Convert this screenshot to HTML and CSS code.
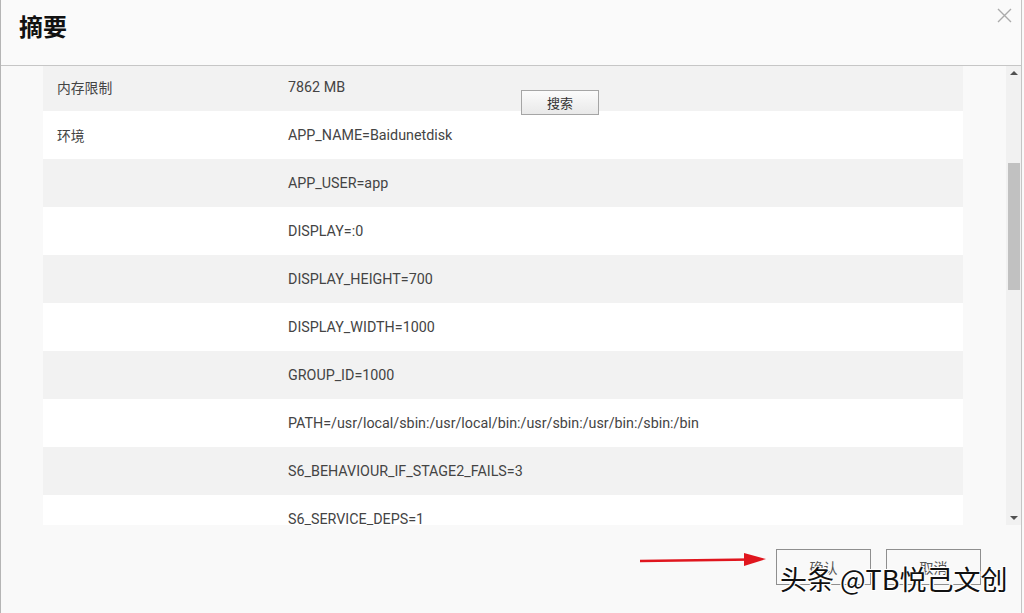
FILE: index.html
```html
<!DOCTYPE html>
<html lang="zh">
<head>
  <meta charset="UTF-8">
  <title>摘要</title>
  <link rel="stylesheet" href="styles.css">
</head>
<body>
  <div class="dialog">
    <div class="header">
      <h1>摘要</h1>
      <svg class="close" width="15" height="15" viewBox="0 0 15 15">
        <path d="M1 1 L14 14 M14 1 L1 14" stroke="#ababab" stroke-width="1.4"/>
      </svg>
    </div>

    <div class="content">
      <div class="table-wrap">
        <div class="table">
          <div class="row"><div class="key">内存限制</div><div class="val">7862 MB</div></div>
          <div class="row"><div class="key">环境</div><div class="val">APP_NAME=Baidunetdisk</div></div>
          <div class="row"><div class="key"></div><div class="val">APP_USER=app</div></div>
          <div class="row"><div class="key"></div><div class="val">DISPLAY=:0</div></div>
          <div class="row"><div class="key"></div><div class="val">DISPLAY_HEIGHT=700</div></div>
          <div class="row"><div class="key"></div><div class="val">DISPLAY_WIDTH=1000</div></div>
          <div class="row"><div class="key"></div><div class="val">GROUP_ID=1000</div></div>
          <div class="row"><div class="key"></div><div class="val">PATH=/usr/local/sbin:/usr/local/bin:/usr/sbin:/usr/bin:/sbin:/bin</div></div>
          <div class="row"><div class="key"></div><div class="val">S6_BEHAVIOUR_IF_STAGE2_FAILS=3</div></div>
          <div class="row"><div class="key"></div><div class="val">S6_SERVICE_DEPS=1</div></div>
        </div>
        <button class="search-btn">搜索</button>
      </div>
      <div class="scrollbar">
        <span class="arrow up"></span>
        <div class="track"><div class="thumb"></div></div>
        <span class="arrow down"></span>
      </div>
    </div>

    <div class="footer">
      <button class="btn">确认</button>
      <button class="btn">取消</button>
      <svg class="red-arrow" width="130" height="16" viewBox="0 0 130 16">
        <line x1="0" y1="8" x2="112" y2="6.5" stroke="#e0161e" stroke-width="2.5"/>
        <polygon points="104,0 126,6 104,13" fill="#e0161e"/>
      </svg>
      <div class="watermark">头条 @TB悦己文创</div>
    </div>
  </div>
</body>
</html>
```

FILE: styles.css
```css
body {
  margin: 0;
  background-color: #f9f9f9;
  font-family: Roboto, "Noto Sans CJK SC", sans-serif;
}
.dialog {
  width: 1020px;
  height: 613px;
  border-left: 1px solid #b5b5b5;
  border-right: 1px solid #c4c4c4;
  background-color: #f9f9f9;
  overflow: hidden;
}
.header {
  height: 65px;
  border-bottom: 1px solid #c6c6c6;
  display: flex;
  justify-content: space-between;
  align-items: flex-start;
  background-color: #fafafa;
}
.header h1 {
  margin: 12px 0 0 18px;
  font-family: "Noto Sans CJK SC", sans-serif;
  font-size: 24px;
  font-weight: bold;
  line-height: 28px;
  color: #111;
}
.close {
  margin: 8px 9px 0 0;
}
.content {
  height: 459px;
  display: flex;
}
.table-wrap {
  position: relative;
  width: 920px;
  margin-left: 42px;
  overflow: hidden;
}
.table {
  margin-top: -3px;
}
.row {
  display: flex;
  align-items: center;
  height: 48px;
  background-color: #fff;
  font-size: 14.3px;
  color: #444;
}
.row:nth-child(odd) {
  background-color: #f2f2f2;
}
.key {
  width: 231px;
  padding-left: 14px;
  font-family: "Noto Sans CJK SC", sans-serif;
  font-size: 13.8px;
}
.val {
  flex: 1;
}
.search-btn {
  position: absolute;
  left: 478px;
  top: 24px;
  width: 78px;
  height: 25px;
  border: 1px solid #a5a5a5;
  background: linear-gradient(#fbfbfb, #e9e9e9);
  font-family: "Noto Sans CJK SC", sans-serif;
  font-size: 13px;
  color: #333;
  padding: 0;
}
.scrollbar {
  margin-left: 43px;
  width: 15px;
  display: flex;
  flex-direction: column;
  background-color: #f1f1f1;
}
.track {
  flex: 1;
  padding-top: 83px;
}
.thumb {
  margin-left: 2px;
  width: 12px;
  height: 127px;
  background-color: #c1c1c1;
}
.arrow {
  height: 14px;
  display: flex;
  justify-content: center;
  align-items: center;
}
.arrow::before {
  content: "";
  border-left: 4px solid transparent;
  border-right: 4px solid transparent;
}
.arrow.up::before {
  border-bottom: 4px solid #505050;
}
.arrow.down::before {
  border-top: 4px solid #505050;
}
.footer {
  position: relative;
  height: 88px;
  display: flex;
  justify-content: flex-end;
  align-items: flex-start;
  gap: 15px;
  padding: 24px 40px 0 0;
  box-sizing: border-box;
}
.btn {
  width: 95px;
  height: 36px;
  border: 1px solid #8f8f8f;
  background-color: transparent;
  font-family: "Noto Sans CJK SC", sans-serif;
  font-size: 14px;
  color: #555;
  padding: 0;
}
.red-arrow {
  position: absolute;
  left: 639px;
  top: 28px;
}
.watermark {
  position: absolute;
  left: 779px;
  top: 34px;
  font-family: "Noto Sans CJK SC", sans-serif;
  font-size: 27px;
  color: #111;
  text-shadow: 1px 1px 0 #fff, -1px -1px 0 #fff, 1px -1px 0 #fff, -1px 1px 0 #fff;
  white-space: nowrap;
}
```
